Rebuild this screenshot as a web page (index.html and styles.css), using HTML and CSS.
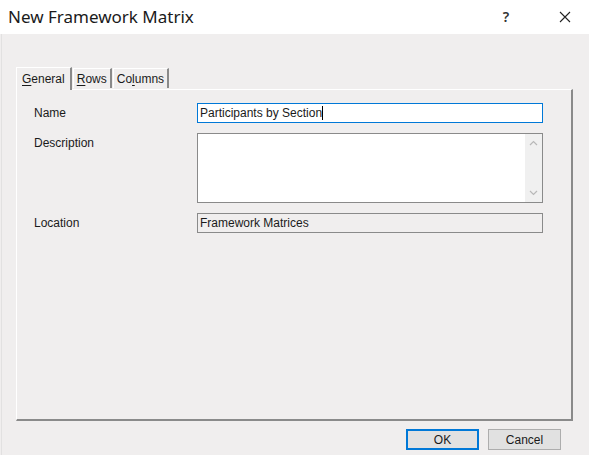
FILE: index.html
```html
<!DOCTYPE html>
<html>
<head>
<meta charset="utf-8">
<link rel="stylesheet" href="styles.css">
</head>
<body>
<div class="window">
  <div class="titlebar">
    <div class="title">New Framework Matrix</div>
    <div class="tb-btn help">?</div>
    <div class="tb-btn close">
      <svg width="12" height="12" viewBox="0 0 12 12"><path d="M1 1 L11 11 M11 1 L1 11" stroke="#222" stroke-width="1.1" fill="none"/></svg>
    </div>
  </div>
  <div class="content">
    <div class="tabs">
      <div class="tab active"><span class="u">G</span>eneral</div>
      <div class="tab"><span class="u">R</span>ows</div>
      <div class="tab">Co<span class="u">l</span>umns</div>
    </div>
    <div class="panel">
      <div class="row">
        <div class="label">Name</div>
        <div class="field input">Participants by Section<span class="caret"></span></div>
      </div>
      <div class="row">
        <div class="label">Description</div>
        <div class="field textarea">
          <div class="scroll">
            <svg width="9" height="6" viewBox="0 0 9 6"><path d="M1 5 L4.5 1.5 L8 5" stroke="#b8b8b8" stroke-width="1.2" fill="none"/></svg>
            <svg width="9" height="6" viewBox="0 0 9 6"><path d="M1 1 L4.5 4.5 L8 1" stroke="#b8b8b8" stroke-width="1.2" fill="none"/></svg>
          </div>
        </div>
      </div>
      <div class="row">
        <div class="label">Location</div>
        <div class="field readonly">Framework Matrices</div>
      </div>
    </div>
    <div class="buttons">
      <div class="btn default">OK</div>
      <div class="btn">Cancel</div>
    </div>
  </div>
</div>
</body>
</html>
```

FILE: styles.css
```css
* { box-sizing: border-box; }
html, body { margin: 0; padding: 0; }
body {
  width: 589px;
  height: 455px;
  overflow: hidden;
  background: #f0eeee;
  font-family: "Liberation Sans", Arial, sans-serif;
  font-size: 12px;
  color: #1a1a1a;
}
.window { width: 589px; height: 455px; display: flex; flex-direction: column; }
.titlebar {
  height: 34px;
  background: #ffffff;
  display: flex;
  align-items: center;
  flex: none;
}
.title {
  font-family: "Noto Sans", "Open Sans", sans-serif;
  font-size: 17px;
  color: #1a1a1a;
  padding-left: 8px;
  padding-bottom: 1px;
  flex: 1;
}
.tb-btn {
  width: 46px;
  height: 34px;
  display: flex;
  align-items: center;
  justify-content: center;
}
.help {
  font-family: "Noto Sans", sans-serif;
  font-size: 14px;
  font-weight: 600;
  color: #333;
  margin-right: 10px;
  padding-bottom: 2px;
}
.close { width: 50px; padding-left: 2px; }
.content {
  flex: 1;
  border-left: 1px solid #e2e1e1;
  margin-left: 1px;
  padding: 32px 0 0 14px;
  display: flex;
  flex-direction: column;
}
.tabs {
  display: flex;
  align-items: flex-end;
  height: 23px;
  position: relative;
  z-index: 1;
}
.tab {
  height: 20px;
  padding: 3px 3px 0 3px;
  border-top: 1px solid #ffffff;
  border-left: 1px solid #ffffff;
  border-right: 2px solid #8a8a8a;
  background: #f0eeee;
  margin-bottom: 1px;
  margin-left: 1px;
  line-height: 14px;
}
.tab.active {
  height: 23px;
  padding: 4px 5px 0 5px;
  margin-bottom: -1px;
  margin-left: 0;
}
.u { text-decoration: underline; text-underline-offset: 2px; }
.panel {
  width: 557px;
  height: 332px;
  border-top: 1px solid #ffffff;
  border-left: 1px solid #ffffff;
  border-right: 2px solid #8a8a8a;
  border-bottom: 2px solid #8a8a8a;
  padding: 13px 0 0 17px;
  display: flex;
  flex-direction: column;
  gap: 10px;
}
.row { display: flex; align-items: flex-start; }
.label { width: 163px; padding-top: 3px; }
.field {
  width: 346px;
  height: 20px;
  border: 1px solid #7a7a7a;
  background: #fff;
  padding: 2px 2px;
  line-height: 14px;
}
.input { border-color: #0078d7; }
.caret {
  display: inline-block;
  width: 1px;
  height: 14px;
  background: #000;
  vertical-align: top;
}
.textarea {
  height: 70px;
  display: flex;
  justify-content: flex-end;
  padding: 0;
  border-color: #8a8a8a;
}
.scroll {
  width: 17px;
  height: 100%;
  background: #f0f0f0;
  display: flex;
  flex-direction: column;
  justify-content: space-between;
  align-items: center;
  padding: 6px 0 6px;
}
.readonly { background: #f0eeee; border-color: #8a8a8a; }
.buttons {
  display: flex;
  justify-content: flex-end;
  gap: 9px;
  padding: 8px 28px 0 0;
}
.btn {
  width: 73px;
  height: 21px;
  border: 1px solid #adadad;
  background: #e1e1e1;
  display: flex;
  align-items: center;
  justify-content: center;
}
.btn.default { border: 2px solid #0078d7; }
```
